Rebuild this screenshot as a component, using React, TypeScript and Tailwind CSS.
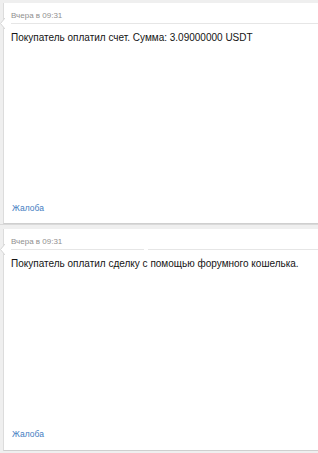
import React from "react";

function Arrow() {
  return (
    <svg
      className="absolute left-[-4px] top-[15px]"
      width="5"
      height="11"
      viewBox="0 0 5 11"
    >
      <polygon points="5,0 0.5,5.5 5,11" fill="#ffffff" />
      <polyline points="5,0 0.5,5.5 5,11" fill="none" stroke="#d6d6d6" strokeWidth="1" />
    </svg>
  );
}

function Card({ text, h, gap, mb }: { text: string; h: string; gap?: boolean; mb: string }) {
  return (
    <div className={`relative ml-[3px] flex flex-col border-l border-b border-l-[#dcdcdc] border-b-[#cfcfcf] bg-white ${h}`}>
      <Arrow />
      <div className="ml-[7px] flex flex-col">
        <div className="pt-[7px] pb-[2px] text-[8px] leading-[11px] text-[#8f8f8f]">
          Вчера в 09:31
        </div>
        {gap ? (
          <div className="flex">
            <div className="h-px w-[133px] bg-[#e6e6e6]" />
            <div className="h-px w-[4px]" />
            <div className="h-px flex-1 bg-[#e6e6e6]" />
          </div>
        ) : (
          <div className="h-px bg-[#e6e6e6]" />
        )}
        <div className="pt-[7px] text-[10px] leading-[13px] text-[#141414]">{text}</div>
      </div>
      <div className="flex-1" />
      <div className={`ml-[8px] text-[8.5px] leading-[12px] text-[#3f7cbf] ${mb}`}>Жалоба</div>
    </div>
  );
}

export default function App() {
  return (
    <div
      className="flex h-[453px] w-[318px] flex-col overflow-hidden bg-[#efefef] pt-[3px]"
      style={{ fontFamily: '"Liberation Sans", Arial, sans-serif' }}
    >
      <Card text="Покупатель оплатил счет. Сумма: 3.09000000 USDT" h="h-[221px]" mb="mb-[9px]" />
      <div className="h-[5px] border-t border-t-[#d9d9d9] bg-[#efefef]" />
      <Card
        text="Покупатель оплатил сделку с помощью форумного кошелька."
        h="h-[222px]"
        mb="mb-[10px]"
        gap
      />
    </div>
  );
}
